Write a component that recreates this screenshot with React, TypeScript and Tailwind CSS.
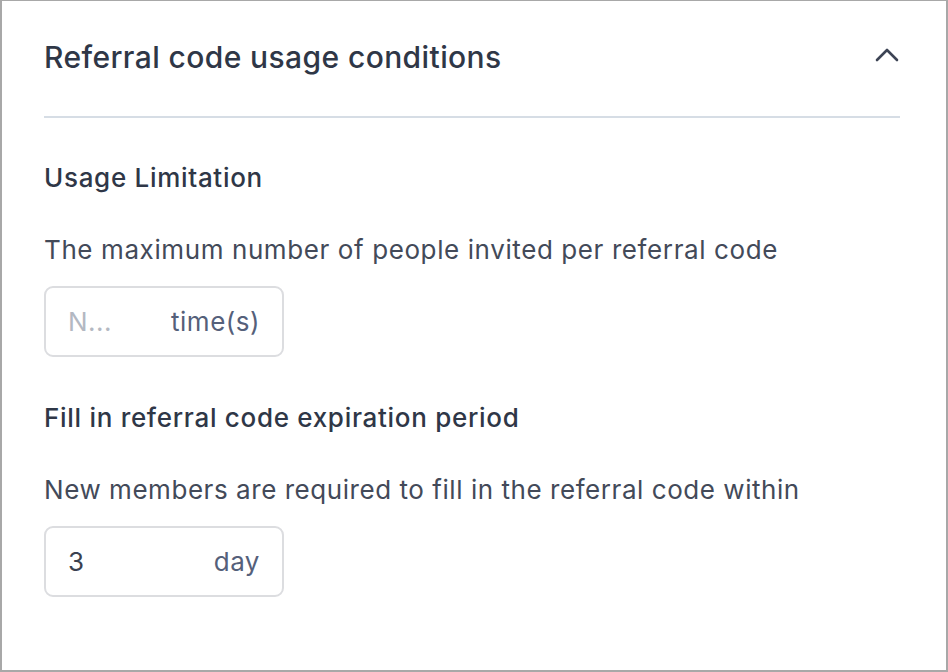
import React from 'react';

interface UnitFieldProps {
  value?: string;
  placeholder?: string;
  unit: string;
}

const UnitField: React.FC<UnitFieldProps> = ({ value, placeholder, unit }) => {
  return (
    <div className="flex items-center justify-between w-[240px] h-[71px] border-2 border-[#dcdde0] rounded-[9px] pl-[22px] pr-[22px] tracking-[0.5px]">
      {value ? (
        <span className="text-[#3a4150]">{value}</span>
      ) : (
        <span className="text-[#b3b8c2]">{placeholder}</span>
      )}
      <span className="text-[#55607a]">{unit}</span>
    </div>
  );
};

const App: React.FC = () => {
  return (
    <div
      className="w-[948px] h-[672px] bg-white border-[#a8a8a8] border-t border-l-2 border-r-2 border-b-2 text-[26px] text-[#434a59]"
      style={{ fontFamily: 'Inter, "Noto Sans", sans-serif' }}
    >
      <div className="pl-[42px] pr-[46px]">
        {/* Header */}
        <div className="flex items-center justify-between h-[117px] border-b-2 border-[#d6dde5]">
          <h2 className="text-[30px] font-medium tracking-[0.4px] text-[#2f3747] -mt-[2px]">Referral code usage conditions</h2>
          <svg width="24" height="15" viewBox="0 0 24 15" className="mr-[1px] -mt-[9px]" fill="none">
            <path d="M2 13 L12 3 L22 13" stroke="#3d4455" strokeWidth="2.6" strokeLinecap="round" strokeLinejoin="round" />
          </svg>
        </div>

        {/* Usage limitation */}
        <div className="pt-[42px]">
          <h3 className="font-medium tracking-[0.7px] text-[#2f3747] leading-[36px]">Usage Limitation</h3>
          <p className="mt-[36px] leading-[36px] tracking-[0.6px]">The maximum number of people invited per referral code</p>
          <div className="mt-[18px]">
            <UnitField placeholder="N..." unit="time(s)" />
          </div>
        </div>

        {/* Expiration */}
        <div className="pt-[43px]">
          <h3 className="font-medium tracking-[0.7px] text-[#2f3747] leading-[36px]">Fill in referral code expiration period</h3>
          <p className="mt-[36px] leading-[36px] tracking-[0.55px]">New members are required to fill in the referral code within</p>
          <div className="mt-[18px]">
            <UnitField value="3" unit="day" />
          </div>
        </div>
      </div>
    </div>
  );
};

export default App;
